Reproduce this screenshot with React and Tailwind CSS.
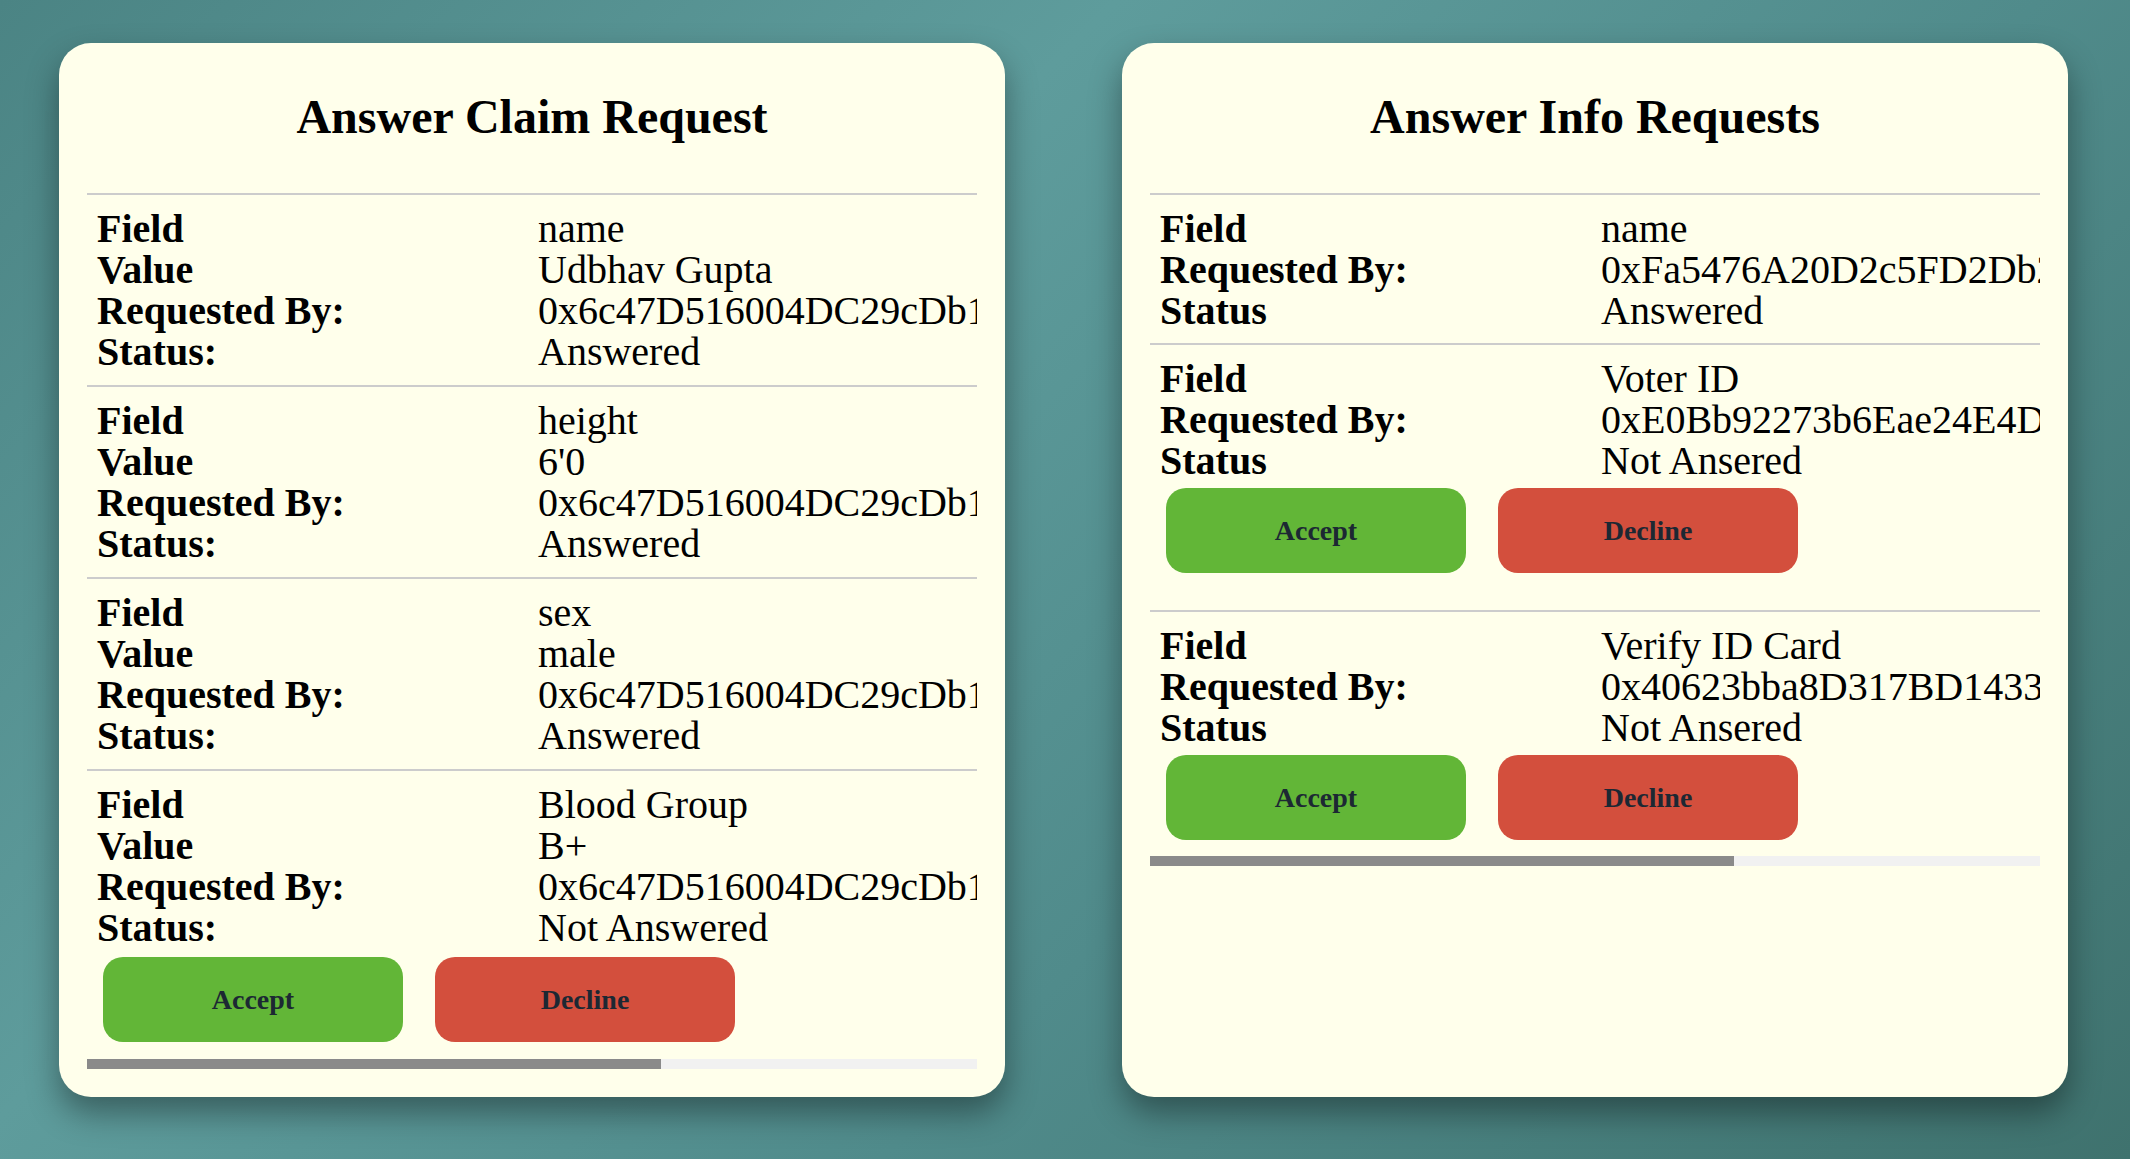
import React from "react";

const claims = [
  { field: "name", value: "Udbhav Gupta", by: "0x6c47D516004DC29cDb1f2B3a9E8c4D7F1a6B0e5C", status: "Answered" },
  { field: "height", value: "6'0", by: "0x6c47D516004DC29cDb1f2B3a9E8c4D7F1a6B0e5C", status: "Answered" },
  { field: "sex", value: "male", by: "0x6c47D516004DC29cDb1f2B3a9E8c4D7F1a6B0e5C", status: "Answered" },
  { field: "Blood Group", value: "B+", by: "0x6c47D516004DC29cDb1f2B3a9E8c4D7F1a6B0e5C", status: "Not Answered", actions: true },
];

const infos = [
  { field: "name", by: "0xFa5476A20D2c5FD2Db27c1E9a3B8d4F6e0C2a715", status: "Answered" },
  { field: "Voter ID", by: "0xE0Bb92273b6Eae24E4D8a1C5f3B9e7D2c6A0f4b1", status: "Not Ansered", actions: true },
  { field: "Verify ID Card", by: "0x40623bba8D317BD1433e9C2a7F5d1B8c4E6a0f3D", status: "Not Ansered", actions: true },
];

function Line({ label, value }) {
  return (
    <div className="flex h-[41px] leading-[41px] whitespace-nowrap">
      <div className="w-[451px] shrink-0 pl-[10px] font-bold">{label}</div>
      <div>{value}</div>
    </div>
  );
}

function Buttons({ className }) {
  return (
    <div className={`flex gap-[32px] pl-[16px] ${className}`}>
      <button className="w-[300px] h-[85px] rounded-[20px] bg-[#62b637] text-[28px] leading-none font-bold text-[#1c2833] font-['Liberation_Serif',serif]">
        Accept
      </button>
      <button className="w-[300px] h-[85px] rounded-[20px] bg-[#d34f3d] text-[28px] leading-none font-bold text-[#1c2833] font-['Liberation_Serif',serif]">
        Decline
      </button>
    </div>
  );
}

function Card({ title, children, thumb }) {
  return (
    <div className="w-[946px] shrink-0 rounded-[32px] bg-[#ffffeb] px-[28px] pb-[28px] shadow-[0_16px_32px_rgba(0,0,0,0.38)] flex flex-col">
      <h2 className="pt-[46px] text-center text-[48px] leading-[55px] font-bold text-black">{title}</h2>
      <div className="mt-[49px] w-full overflow-hidden">
        <div className="w-[1381px] text-[40px] text-black">{children}</div>
      </div>
      <div className="h-[10px] w-full bg-[#f1f1f1]">
        <div className={`h-full bg-[#8a8a8a] ${thumb}`} />
      </div>
    </div>
  );
}

export default function App() {
  return (
    <div className="min-h-screen w-full bg-[linear-gradient(135deg,#4b8484_0%,#5e9c9c_34%,#508b8b_62%,#3f726e_100%)] font-['Liberation_Serif',serif]">
      <div className="flex gap-[117px] pl-[59px] pt-[43px] pb-[62px]">
        <Card title="Answer Claim Request" thumb="w-[64.5%]">
          {claims.map((c, i) => (
            <div
              key={i}
              className={`border-t-2 border-[#cccccc] pt-[13px] ${c.actions ? "" : "pb-[13px]"}`}
            >
              <Line label="Field" value={c.field} />
              <Line label="Value" value={c.value} />
              <Line label="Requested By:" value={c.by} />
              <Line label="Status:" value={c.status} />
              {c.actions && <Buttons className="mt-[9px] mb-[17px]" />}
            </div>
          ))}
        </Card>
        <Card title="Answer Info Requests" thumb="w-[65.6%]">
          {infos.map((c, i) => (
            <div
              key={i}
              className={`border-t-2 border-[#cccccc] pt-[13px] ${
                c.actions ? (i < infos.length - 1 ? "pb-[21px]" : "") : "pb-[12px]"
              }`}
            >
              <Line label="Field" value={c.field} />
              <Line label="Requested By:" value={c.by} />
              <Line label="Status" value={c.status} />
              {c.actions && <Buttons className="mt-[7px] mb-[16px]" />}
            </div>
          ))}
        </Card>
      </div>
    </div>
  );
}
